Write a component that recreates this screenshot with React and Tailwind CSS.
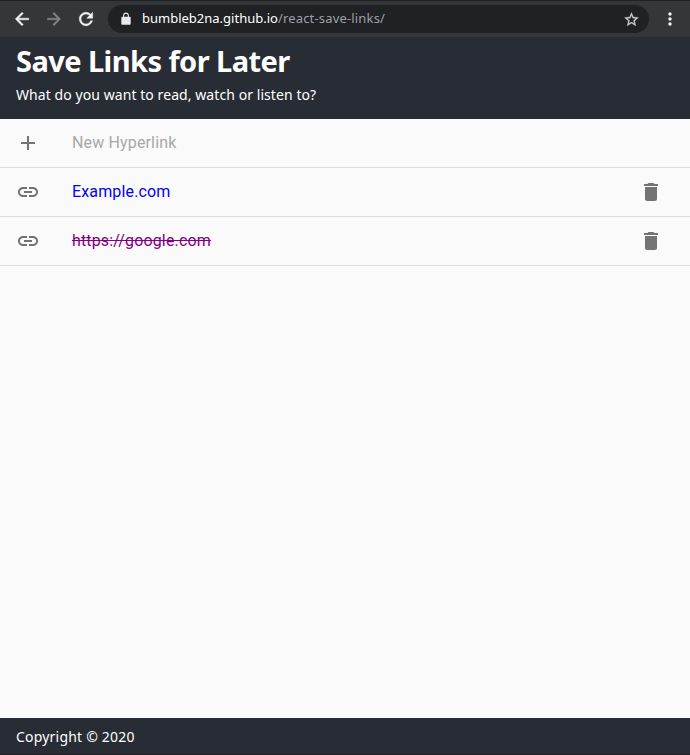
import React from "react";

const PATHS = {
  back: "M20 11H7.83l5.59-5.59L12 4l-8 8 8 8 1.41-1.41L7.83 13H20v-2z",
  forward: "M12 4l-1.41 1.41L16.17 11H4v2h12.17l-5.58 5.59L12 20l8-8z",
  reload:
    "M17.65 6.35C16.2 4.9 14.21 4 12 4c-4.42 0-7.99 3.58-7.99 8s3.57 8 7.99 8c3.73 0 6.84-2.55 7.73-6h-2.08c-.82 2.33-3.04 4-5.65 4-3.31 0-6-2.69-6-6s2.69-6 6-6c1.66 0 3.14.69 4.22 1.78L13 11h7V4l-2.35 2.35z",
  lock: "M18 8h-1V6c0-2.76-2.24-5-5-5S7 3.24 7 6v2H6c-1.1 0-2 .9-2 2v10c0 1.1.9 2 2 2h12c1.1 0 2-.9 2-2V10c0-1.1-.9-2-2-2zm-2.9 0H8.9V6c0-1.71 1.39-3.1 3.1-3.1s3.1 1.39 3.1 3.1v2z",
  star: "M22 9.24l-7.19-.62L12 2 9.19 8.63 2 9.24l5.46 4.73L5.82 21 12 17.27 18.18 21l-1.63-7.03L22 9.24zM12 15.4l-3.76 2.27 1-4.28-3.32-2.88 4.38-.38L12 6.1l1.71 4.04 4.38.38-3.32 2.88 1 4.28L12 15.4z",
  more: "M12 8c1.1 0 2-.9 2-2s-.9-2-2-2-2 .9-2 2 .9 2 2 2zm0 2c-1.1 0-2 .9-2 2s.9 2 2 2 2-.9 2-2-.9-2-2-2zm0 6c-1.1 0-2 .9-2 2s.9 2 2 2 2-.9 2-2-.9-2-2-2z",
  add: "M19 13h-6v6h-2v-6H5v-2h6V5h2v6h6v2z",
  link: "M3.9 12c0-1.71 1.39-3.1 3.1-3.1h4V7H7c-2.76 0-5 2.24-5 5s2.24 5 5 5h4v-1.9H7c-1.71 0-3.1-1.39-3.1-3.1zM8 13h8v-2H8v2zm9-6h-4v1.9h4c1.71 0 3.1 1.39 3.1 3.1s-1.39 3.1-3.1 3.1h-4V17h4c2.76 0 5-2.24 5-5s-2.24-5-5-5z",
  trash: "M6 19c0 1.1.9 2 2 2h8c1.1 0 2-.9 2-2V7H6v12zM19 4h-3.5l-1-1h-5l-1 1H5v2h14V4z",
};

function Icon({ name, className }) {
  return (
    <svg viewBox="0 0 24 24" fill="currentColor" className={`shrink-0 ${className}`}>
      <path d={PATHS[name]} />
    </svg>
  );
}

function Toolbar() {
  return (
    <div className="flex h-[37px] shrink-0 items-center border-t border-[#202124] bg-[#35363a] pl-[12px] text-[#f1f3f4]">
      <Icon name="back" className="size-5 stroke-current stroke-[0.6]" />
      <Icon name="forward" className="ml-[12px] size-5 stroke-current stroke-[0.4] text-[#85868a]" />
      <Icon name="reload" className="ml-[12px] size-5 stroke-current stroke-[0.6]" />
      <div className="ml-[12px] flex h-7 w-[541px] items-center rounded-full bg-[#202124] pr-[9px] pl-[11px]">
        <Icon name="lock" className="size-[14px] text-[#e8eaed]" />
        <span className="ml-[9px] grow font-['Noto_Sans',sans-serif] text-[13px] whitespace-nowrap text-[#9aa0a6]">
          <span className="text-white">bumbleb2na.github.io</span>
          <span className="tracking-[0.17px]">/react-save-links/</span>
        </span>
        <Icon name="star" className="size-[17px] stroke-current stroke-[0.4] text-[#c8cacd]" />
      </div>
      <Icon name="more" className="ml-[10.5px] size-5" />
    </div>
  );
}

function Row({ icon, children, removable }) {
  return (
    <li className="flex h-[49px] items-center border-b border-[#dcdcdc] pr-[27px] pl-4">
      <Icon name={icon} className="size-6 text-[#737373]" />
      <span className="ml-8 grow font-[Roboto,sans-serif] text-base leading-6 tracking-[0.15px]">{children}</span>
      {removable && <Icon name="trash" className="size-6 text-[#737373]" />}
    </li>
  );
}

export default function App() {
  return (
    <div className="flex h-screen flex-col overflow-hidden bg-[#fafafa] font-['Noto_Sans',sans-serif]">
      <Toolbar />
      <header className="h-[82px] shrink-0 bg-[#282c34] px-4 pt-[4px] text-white">
        <h1 className="text-[29px] leading-10 font-bold tracking-[-0.56px] whitespace-nowrap">Save Links for Later</h1>
        <p className="mt-[4px] text-[14px] leading-5 tracking-[0.07px] whitespace-nowrap">
          What do you want to read, watch or listen to?
        </p>
      </header>
      <main className="grow">
        <ul>
          <Row icon="add">
            <span className="text-[#a8a8a8]">New Hyperlink</span>
          </Row>
          <Row icon="link" removable>
            <span className="text-[#0000ff]">Example.com</span>
          </Row>
          <Row icon="link" removable>
            <span className="text-[#800080] line-through">https://google.com</span>
          </Row>
        </ul>
      </main>
      <footer className="flex h-[37px] shrink-0 items-center border-b border-[#202124] bg-[#282c34] px-4 text-[14px] tracking-[0.2px] text-white">
        Copyright © 2020
      </footer>
    </div>
  );
}
